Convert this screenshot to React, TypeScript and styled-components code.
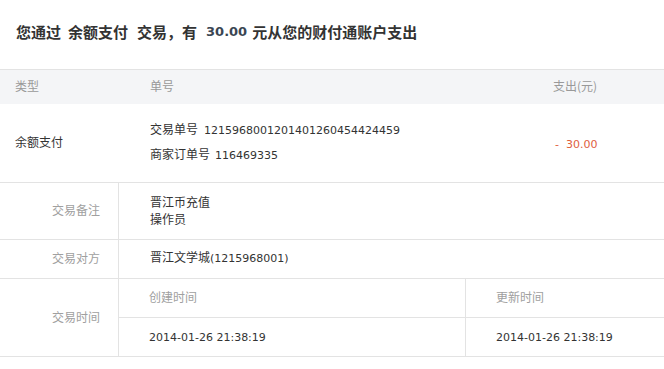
import styled, { createGlobalStyle } from "styled-components";

const GlobalStyle = createGlobalStyle`
  html, body {
    margin: 0;
    padding: 0;
    background: #ffffff;
  }
  body {
    font-family: "Noto Sans CJK SC", "Liberation Sans", sans-serif;
    font-size: 12px;
    color: #333333;
  }
`;

const Page = styled.div`
  width: 664px;
`;

const Title = styled.h1`
  margin: 0;
  height: 69px;
  box-sizing: border-box;
  padding: 0 0 6px 16px;
  display: flex;
  align-items: center;
  font-size: 15px;
  font-weight: bold;
  color: #333333;
  white-space: nowrap;
`;

const Pay = styled.span`
  margin: 0 9px 0 7px;
`;

const TitleAmount = styled.span`
  margin: 0 5px 0 9px;
  font-family: "DejaVu Sans", sans-serif;
  font-size: 13px;
  font-weight: bold;
  color: #3b4653;
`;

const Table = styled.div`
  border-top: 1px solid #e3e3e3;
`;

const SummaryRow = styled.div<{ $head?: boolean }>`
  display: grid;
  grid-template-columns: 150px 1fr 111px;
  align-items: center;
  box-sizing: border-box;
  height: ${(p) => (p.$head ? "34px" : "79px")};
  padding-bottom: 3px;
  background: ${(p) => (p.$head ? "#f4f5f7" : "#ffffff")};
  color: ${(p) => (p.$head ? "#999999" : "#333333")};
  border-bottom: ${(p) => (p.$head ? "none" : "1px solid #e3e3e3")};
`;

const TypeCell = styled.div`
  padding-left: 15px;
`;

const NoCell = styled.div`
  display: flex;
  flex-direction: column;
  gap: 6px;
`;

const Line = styled.div`
  line-height: 17px;
  white-space: nowrap;
`;

const Num = styled.span<{ $gap?: number }>`
  font-family: "DejaVu Sans", sans-serif;
  font-size: 11px;
  margin-left: ${(p) => p.$gap ?? 0}px;
`;

const Amount = styled.div`
  color: #e0603e;
  padding: 2px 0 0 2px;
  white-space: pre;
`;

const DetailRow = styled.div<{ $h: number }>`
  display: grid;
  grid-template-columns: 119px 1fr;
  min-height: ${(p) => p.$h}px;
  border-bottom: 1px solid #e3e3e3;
`;

const Label = styled.div`
  display: flex;
  align-items: center;
  justify-content: flex-end;
  padding: 0 18px 3px 0;
  color: #a0a0a0;
  border-right: 1px solid #e3e3e3;
`;

const Value = styled.div`
  display: flex;
  flex-direction: column;
  justify-content: center;
  padding: 0 0 3px 31px;
`;

const TimeGrid = styled.div`
  display: grid;
  grid-template-columns: 347px 1fr;
  grid-template-rows: 39px 38px;
`;

const TimeCell = styled.div<{ $first?: boolean; $head?: boolean }>`
  display: flex;
  align-items: center;
  padding: ${(p) => (p.$head ? "0 0 3px 30px" : "0 0 0 30px")};
  color: ${(p) => (p.$head ? "#a0a0a0" : "#333333")};
  border-right: ${(p) => (p.$first ? "1px solid #e3e3e3" : "none")};
  border-bottom: ${(p) => (p.$head ? "1px solid #e3e3e3" : "none")};
`;

export default function App() {
  return (
    <Page>
      <GlobalStyle />
      <Title>
        您通过<Pay>余额支付</Pay>交易，有<TitleAmount>30.00</TitleAmount>元从您的财付通账户支出
      </Title>
      <Table>
        <SummaryRow $head>
          <TypeCell>类型</TypeCell>
          <div>单号</div>
          <div>支出(元)</div>
        </SummaryRow>
        <SummaryRow>
          <TypeCell>余额支付</TypeCell>
          <NoCell>
            <Line>
              交易单号<Num $gap={6}>1215968001201401260454424459</Num>
            </Line>
            <Line>
              商家订单号<Num $gap={5}>116469335</Num>
            </Line>
          </NoCell>
          <Amount>
            <Num>-  30.00</Num>
          </Amount>
        </SummaryRow>
        <DetailRow $h={56}>
          <Label>交易备注</Label>
          <Value>
            <Line>晋江币充值</Line>
            <Line>操作员</Line>
          </Value>
        </DetailRow>
        <DetailRow $h={38}>
          <Label>交易对方</Label>
          <Value>
            <Line>
              晋江文学城<Num>(1215968001)</Num>
            </Line>
          </Value>
        </DetailRow>
        <DetailRow $h={77}>
          <Label>交易时间</Label>
          <TimeGrid>
            <TimeCell $first $head>创建时间</TimeCell>
            <TimeCell $head>更新时间</TimeCell>
            <TimeCell $first>
              <Num>2014-01-26 21:38:19</Num>
            </TimeCell>
            <TimeCell>
              <Num>2014-01-26 21:38:19</Num>
            </TimeCell>
          </TimeGrid>
        </DetailRow>
      </Table>
    </Page>
  );
}
